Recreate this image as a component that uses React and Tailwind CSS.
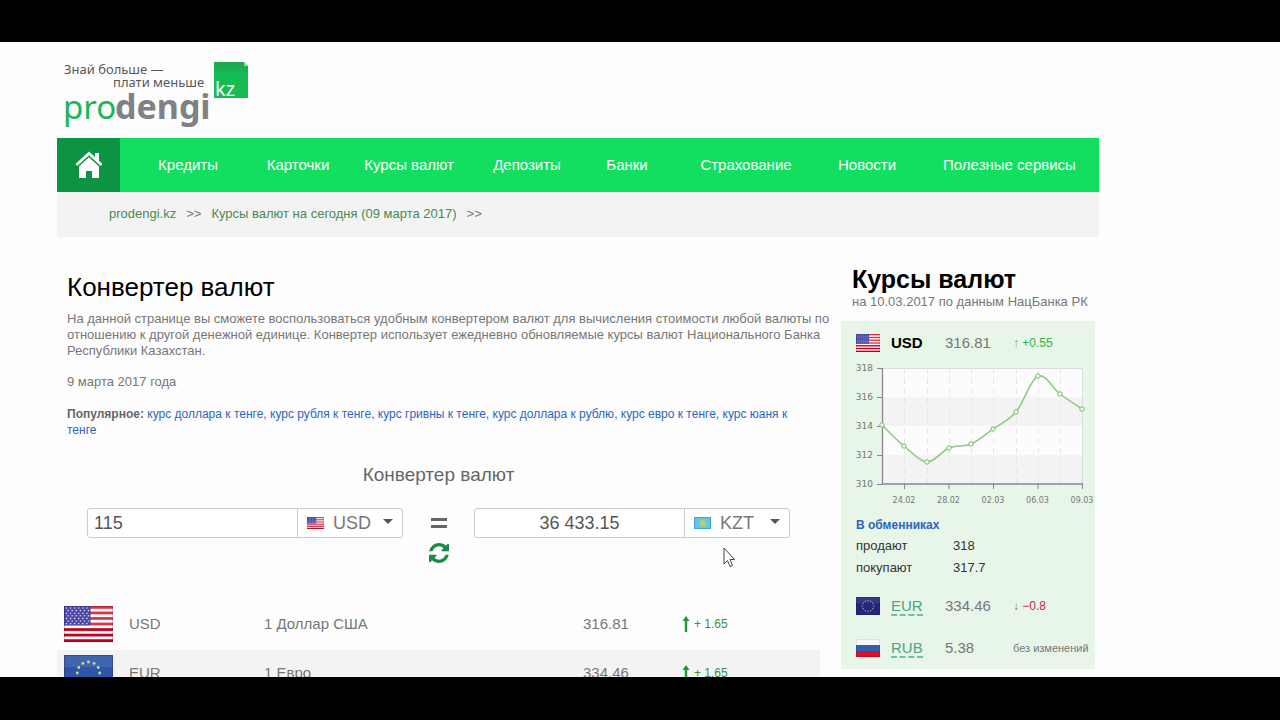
import { useState } from 'react'

// ── Data ──────────────────────────────────────────────────────────────────────

const NAV = [
  'Кредиты', 'Карточки', 'Курсы валют', 'Депозиты',
  'Банки', 'Страхование', 'Новости', 'Полезные сервисы',
]

const POPULAR = [
  'курс доллара к тенге', 'курс рубля к тенге', 'курс гривны к тенге',
  'курс доллара к рублю', 'курс евро к тенге', 'курс юаня к тенге',
]

const RATES = [
  { code: 'USD', name: '1 Доллар США', rate: '316.81', diff: '+ 1.65' },
  { code: 'EUR', name: '1 Евро',       rate: '334.46', diff: '+ 1.65' },
]

// Chart points, in the coordinates of the chart's viewBox
const POINTS = [
  [34, 63], [56, 84], [79, 100], [101, 86], [123, 82],
  [145, 67], [168, 50], [190, 14], [212, 32], [234, 47],
]

// ── Flags ─────────────────────────────────────────────────────────────────────

function Flag({ code, className, dark }) {
  return (
    <svg viewBox="0 0 48 36" preserveAspectRatio="none" className={className} aria-hidden="true">
      {code === 'USD' && (
        <>
          <rect width="48" height="36" fill="#fff" />
          {[0, 1, 2, 3, 4, 5, 6].map(i => (
            <rect key={i} y={i * 5.54} width="48" height="2.77" fill={i < 4 ? '#dc3447' : '#c4001f'} />
          ))}
          <rect width="26" height="19.4" fill="#4a47a8" />
          {[0, 1, 2, 3, 4, 5, 6].map(r => (
            [0, 1, 2, 3, 4, 5].map(c => (
              <circle key={`${r}-${c}`} cx={2.4 + c * 4 + (r % 2) * 1.6} cy={2 + r * 2.6} r="0.8" fill="#d6d6f5" />
            ))
          ))}
        </>
      )}
      {code === 'EUR' && (
        <>
          <rect width="48" height="36" fill={dark ? '#25257c' : '#2f55a8'} />
          <rect width="48" height="12" fill={dark ? '#3f3f8c' : '#4a6cb4'} opacity="0.7" />
          {[0, 1, 2, 3, 4, 5, 6, 7, 8, 9, 10, 11].map(i => (
            <circle
              key={i}
              cx={24 + 11 * Math.sin(i * Math.PI / 6)}
              cy={18 - 11 * Math.cos(i * Math.PI / 6)}
              r="1.4"
              fill={dark ? '#a9a67c' : '#d3dc7c'}
            />
          ))}
        </>
      )}
      {code === 'RUB' && (
        <>
          <rect width="48" height="12" fill="#fafafa" />
          <rect y="12" width="48" height="12" fill="#2f62ad" />
          <rect y="24" width="48" height="12" fill="#d8102c" />
        </>
      )}
      {code === 'KZT' && (
        <>
          <rect width="48" height="36" fill="#5ec9e6" />
          <circle cx="25" cy="17" r="8" fill="#c3cf5c" />
          <path d="M14 23q11 9 22 0" fill="none" stroke="#c3cf5c" strokeWidth="3" />
          <rect x="1.5" y="1.5" width="45" height="33" fill="none" stroke="#3fa6cc" strokeWidth="3" />
        </>
      )}
      {code !== 'KZT' && <rect x="0.5" y="0.5" width="47" height="35" fill="none" stroke="#000" strokeOpacity="0.2" />}
    </svg>
  )
}

// ── Header ────────────────────────────────────────────────────────────────────

function Logo() {
  return (
    <svg viewBox="0 0 190 70" className="w-[190px] h-[70px]" fontFamily="'Noto Sans', sans-serif" role="img" aria-label="prodengi.kz">
      <defs>
        <linearGradient id="kz" x1="0" y1="0" x2="0" y2="1">
          <stop offset="0" stopColor="#1fa651" />
          <stop offset="0.35" stopColor="#12bd52" />
          <stop offset="1" stopColor="#1cb955" />
        </linearGradient>
      </defs>
      <text x="1" y="15" fontSize="13" fill="#58585a">Знай больше —</text>
      <text x="50" y="28" fontSize="13" fill="#58585a">плати меньше</text>
      <text x="0" y="60" fontSize="33" fill="#1fb457">pro</text>
      <text x="52" y="60" fontSize="34" fontWeight="700" fill="#808184">dengi</text>
      <path d="M151 3h30l4 4v32h-34z" fill="url(#kz)" />
      <path d="M181 3v4h4z" fill="#8fd9aa" />
      <text x="152" y="37" fontSize="20" fill="#fff">kz</text>
    </svg>
  )
}

function HomeIcon() {
  return (
    <svg viewBox="0 0 28 28" className="w-7 h-7" fill="#fff" aria-hidden="true">
      <path d="M14 0.5L0.5 13l1.8 2L14 4.2 25.7 15l1.8-2-3.5-3.2V2h-4v4z" />
      <path d="M14 6.2L4 15.4V27h7v-7h6v7h7V15.4z" />
    </svg>
  )
}

// ── Converter ─────────────────────────────────────────────────────────────────

function AmountGroup({ label, value, onChange, currency, onCurrency, align }) {
  return (
    <div className="flex h-[30px] bg-white border border-[#ccc] rounded-[3px] text-[18px]">
      <input
        aria-label={label}
        value={value}
        onChange={e => onChange(e.target.value)}
        className={`flex-1 min-w-0 px-[6px] text-[#555] outline-none ${align}`}
      />
      <div className="relative flex items-center w-[105px] border-l border-[#ccc]">
        <Flag code={currency} className="absolute left-[9px] w-[17px] h-3 pointer-events-none" />
        <select
          aria-label={`${label}: валюта`}
          value={currency}
          onChange={e => onCurrency(e.target.value)}
          className="w-full h-full pl-[35px] appearance-none bg-transparent text-[#777] outline-none"
        >
          <option>USD</option>
          <option>EUR</option>
          <option>RUB</option>
          <option>KZT</option>
        </select>
        <svg viewBox="0 0 10 5" className="absolute right-[9px] top-[10px] w-[10px] h-[5px] pointer-events-none" fill="#555">
          <path d="M0 0h10L5 5z" />
        </svg>
      </div>
    </div>
  )
}

function Converter() {
  const [from, setFrom] = useState('USD')
  const [to, setTo] = useState('KZT')
  const [amount, setAmount] = useState('115')
  const [result, setResult] = useState('36 433.15')

  function swap() {
    setFrom(to)
    setTo(from)
  }

  return (
    <section className="mt-[23px]">
      <h2 className="text-[19px] leading-7 text-center text-[#666]">Конвертер валют</h2>
      <div className="mt-[19px] px-[30px] grid grid-cols-[minmax(0,1fr)_71px_minmax(0,1fr)]">
        <AmountGroup label="Сумма" value={amount} onChange={setAmount} currency={from} onCurrency={setFrom} align="text-left" />
        <div className="flex flex-col items-center">
          <svg viewBox="0 0 16 12" className="w-4 h-3 mt-[9px]" fill="#666" aria-label="равно">
            <path d="M0 1h16v3H0zM0 8h16v3H0z" />
          </svg>
          <button type="button" onClick={swap} aria-label="Поменять валюты" className="mt-[14px]">
            <svg viewBox="0 0 1536 1536" className="w-5 h-5" fill="#1a8a45">
              <path d="M1511 928q0 5-1 7-64 268-268 434.500T764 1536q-146 0-282.500-55T238 1324l-129 129q-19 19-45 19t-45-19-19-45V960q0-26 19-45t45-19h448q26 0 45 19t19 45-19 45l-137 137q71 66 161 102t187 36q134 0 250-65t186-179q11-17 53-117 8-23 30-23h192q13 0 22.500 9.500t9.500 22.500zm25-800v448q0 26-19 45t-45 19h-448q-26 0-45-19t-19-45 19-45l138-138Q969 256 768 256q-134 0-250 65T332 500q-11 17-53 117-8 23-30 23H50q-13 0-22.500-9.500T18 608v-7q65-268 270-434.500T768 0q146 0 284 55.500T1297 212l130-129q19-19 45-19t45 19 19 45z" />
            </svg>
          </button>
        </div>
        <AmountGroup label="Результат" value={result} onChange={setResult} currency={to} onCurrency={setTo} align="text-center" />
      </div>
    </section>
  )
}

function RatesTable() {
  return (
    <table className="mt-[38px] w-full table-fixed text-left text-[15px] text-[#777]">
      <colgroup>
        <col className="w-[72px]" />
        <col className="w-[135px]" />
        <col />
        <col className="w-[99px]" />
        <col className="w-[138px]" />
      </colgroup>
      <tbody>
        {RATES.map(r => (
          <tr key={r.code} className="h-[49px] even:bg-[#f3f3f3] [&>td]:pb-[3px]">
            <td className="pl-[7px]"><Flag code={r.code} className="w-[49px] h-9" /></td>
            <td>{r.code}</td>
            <td>{r.name}</td>
            <td>{r.rate}</td>
            <td>
              <span className="flex items-center gap-1 text-[12px] text-[#3c8f42]">
                <svg viewBox="0 0 8 16" className="w-2 h-4" fill="#1f9a33" aria-hidden="true">
                  <path d="M4 0l3.500 5H5.200v11H2.800V5H0.500z" />
                </svg>
                {r.diff}
              </span>
            </td>
          </tr>
        ))}
      </tbody>
    </table>
  )
}

// ── Sidebar ───────────────────────────────────────────────────────────────────

// Smooth line through the points (Catmull-Rom turned into Béziers)
function smoothPath(pts) {
  let d = `M${pts[0][0]} ${pts[0][1]}`
  for (let i = 0; i < pts.length - 1; i++) {
    const p0 = pts[i - 1] || pts[i]
    const p1 = pts[i]
    const p2 = pts[i + 1]
    const p3 = pts[i + 2] || p2
    d += `C${p1[0] + (p2[0] - p0[0]) / 6} ${p1[1] + (p2[1] - p0[1]) / 6}`
    d += ` ${p2[0] - (p3[0] - p1[0]) / 6} ${p2[1] - (p3[1] - p1[1]) / 6} ${p2[0]} ${p2[1]}`
  }
  return d
}

function RateChart() {
  return (
    <svg viewBox="0 0 247 146" className="w-full" fontFamily="'DejaVu Sans', sans-serif" fontSize="9" fill="#777" role="img" aria-label="Курс доллара">
      <rect x="34" y="6" width="200" height="116" fill="#fcfcfc" />
      <rect x="34" y="35" width="200" height="29" fill="#f3f3f3" />
      <rect x="34" y="93" width="200" height="29" fill="#f3f3f3" />
      {POINTS.slice(1, -1).map(([x]) => (
        <path key={x} d={`M${x + 0.5} 6V122`} stroke="#e8e8e8" strokeDasharray="6 4" />
      ))}
      <path d="M34 6.500H234.500V122" fill="none" stroke="#dcdcdc" />
      {[318, 316, 314, 312, 310].map((v, i) => (
        <g key={v}>
          <path d={`M29 ${6.5 + i * 29}H34`} stroke="#888" />
          <text x="25" y={9 + i * 29} textAnchor="end">{v}</text>
        </g>
      ))}
      <path d="M34.500 6V122M34 122H235" fill="none" stroke="#888" strokeWidth="1.300" />
      {['24.02', '28.02', '02.03', '06.03', '09.03'].map((t, i) => (
        <g key={t}>
          <path d={`M${56.5 + i * 44.5} 122v5`} stroke="#888" />
          <text x={56 + i * 44.5} y="141" fontSize="8" textAnchor="middle">{t}</text>
        </g>
      ))}
      <path d={smoothPath(POINTS)} fill="none" stroke="#8cc782" strokeWidth="1.500" />
      {POINTS.map(([x, y]) => (
        <circle key={x} cx={x} cy={y} r="2.200" fill="#f4fff2" stroke="#6fbf62" />
      ))}
    </svg>
  )
}

function SideRow({ code, rate, active, children }) {
  return (
    <div className={`grid grid-cols-[35px_54px_68px_1fr] items-center pl-[15px] text-[15px] text-[#777] ${active ? 'h-[41px] pt-[3px]' : 'h-[42px]'}`}>
      <Flag code={code} dark className="w-6 h-[18px]" />
      {active
        ? <b className="text-black">{code}</b>
        : <a href="#" className="justify-self-start leading-[17px] text-[#4aa67c] border-b-2 border-dashed border-[#6cc49a]">{code}</a>}
      <span>{rate}</span>
      {children}
    </div>
  )
}

function Sidebar() {
  return (
    <aside className="w-[254px] shrink-0 ml-[21px] mr-1 pt-[27px]">
      <h2 className="pl-[11px] text-[25px] leading-[30px] font-bold text-black whitespace-nowrap">Курсы валют</h2>
      <p className="pl-[11px] text-[13px] leading-4 whitespace-nowrap">на 10.03.2017 по данным НацБанка РК</p>
      <div className="mt-[11px] bg-[#e8f5e9] rounded-[2px]">
        <SideRow code="USD" rate="316.81" active>
          <span className="text-[12px] text-[#2fb34a]"><span className="text-[#6aa877]">↑</span> +0.55</span>
        </SideRow>
        <div className="pl-[7px]"><RateChart /></div>
        <div className="pl-[15px] mt-[7px] text-[13px] leading-[22px] text-[#333]">
          <a href="#" className="block font-bold text-[12px] text-[#2a66c0] leading-5">В обменниках</a>
          <dl className="grid grid-cols-[97px_1fr]">
            <dt>продают</dt><dd>318</dd>
            <dt>покупают</dt><dd>317.7</dd>
          </dl>
        </div>
        <div className="mt-[6px]">
          <SideRow code="EUR" rate="334.46">
            <span className="text-[12px] text-[#b8284a]"><span className="text-[#a07070]">↓</span> −0.8</span>
          </SideRow>
          <SideRow code="RUB" rate="5.38">
            <span className="text-[11px] whitespace-nowrap">без изменений</span>
          </SideRow>
        </div>
      </div>
    </aside>
  )
}

// ── Page ──────────────────────────────────────────────────────────────────────

export default function App() {
  return (
    <div className="h-screen bg-black pt-[42px] pb-[43px] font-['Liberation_Sans',Arial,sans-serif]">
      <div className="relative h-full overflow-hidden bg-[#fdfdfd] pl-[57px] text-[13px] text-[#777]">
        <div className="w-full max-w-[1042px]">
          <header>
            <a href="#" className="block h-24 pl-[6px] pt-[17px]"><Logo /></a>
            <nav className="flex h-[54px] bg-[#12df60]">
              <a href="#" aria-label="Главная" className="flex items-center justify-center w-[63px] bg-[#0d9443]">
                <HomeIcon />
              </a>
              <div className="flex-1 grid grid-cols-[136fr_84fr_138fr_98fr_102fr_136fr_106fr_179fr] items-center text-center text-[15px] text-white whitespace-nowrap">
                {NAV.map(n => <a key={n} href="#">{n}</a>)}
              </div>
            </nav>
            <div className="flex items-center gap-[10px] h-[45px] pl-[52px] pb-[2px] bg-[#f3f3f3] text-[#4a8a4e]">
              <a href="#">prodengi.kz</a>
              <span className="text-[#777]">&gt;&gt;</span>
              <a href="#">Курсы валют на сегодня (09 марта 2017)</a>
              <span className="text-[#777]">&gt;&gt;</span>
            </div>
          </header>

          <div className="flex">
            <main className="flex-1 min-w-0 pt-[34px]">
              <div className="pl-[10px] leading-4">
                <h1 className="text-[26px] leading-8 text-black">Конвертер валют</h1>
                <p className="mt-2 -mr-3">
                  На данной странице вы сможете воспользоваться удобным конвертером валют для вычисления стоимости любой валюты по отношению к другой денежной единице. Конвертер использует ежедневно обновляемые курсы валют Национального Банка Республики Казахстан.
                </p>
                <p className="mt-[15px]">9 марта 2017 года</p>
                <p className="mt-4 pr-2 text-[12px] leading-4 text-[#2a66c0]">
                  <b className="text-[#666]">Популярное:</b>{' '}
                  {POPULAR.map((p, i) => (
                    <span key={p}>{i > 0 && ', '}<a href="#">{p}</a></span>
                  ))}
                </p>
              </div>
              <Converter />
              <RatesTable />
            </main>
            <Sidebar />
          </div>
        </div>

        {/* Mouse pointer */}
        <svg viewBox="0 0 12 20" className="absolute left-[723px] top-[505px] w-3 h-5" aria-hidden="true">
          <path d="M1 1v16l3.500-3.500 2.500 6 2.500-1-2.500-6H11.500z" fill="#fff" stroke="#444" />
        </svg>
      </div>
    </div>
  )
}
